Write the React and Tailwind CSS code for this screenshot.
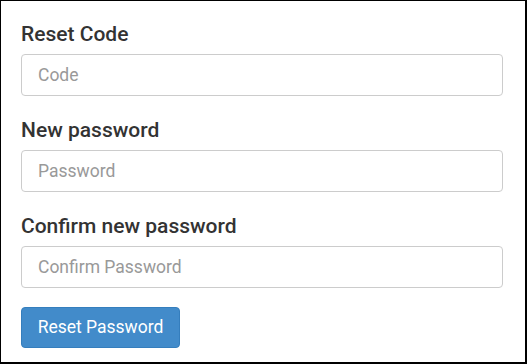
import React from 'react';

const Field = ({ label, placeholder, type = 'text' }) => (
  <div className="mb-[21px]">
    <label className="block text-[21px] leading-[26px] font-medium text-[#333] mb-[7px]">{label}</label>
    <input
      type={type}
      placeholder={placeholder}
      className="block w-full h-[42px] px-4 text-[17.5px] text-[#555] bg-white border border-[#ccc] rounded-[4px] placeholder:text-[#999] outline-none"
    />
  </div>
);

export default function App() {
  return (
    <div
      className="w-[527px] h-[364px] bg-white border-l border-t border-r-2 border-b-2 border-black pt-[20px] pl-[20px] pr-[22px]"
      style={{ fontFamily: 'Roboto, "Liberation Sans", sans-serif' }}
    >
      <Field label="Reset Code" placeholder="Code" />
      <Field label="New password" placeholder="Password" type="password" />
      <Field label="Confirm new password" placeholder="Confirm Password" type="password" />
      <button className="h-[41px] w-[159px] mt-[-2px] bg-[#428bca] border border-[#357ebd] rounded-[4px] text-white text-[17.5px]">
        Reset Password
      </button>
    </div>
  );
}
